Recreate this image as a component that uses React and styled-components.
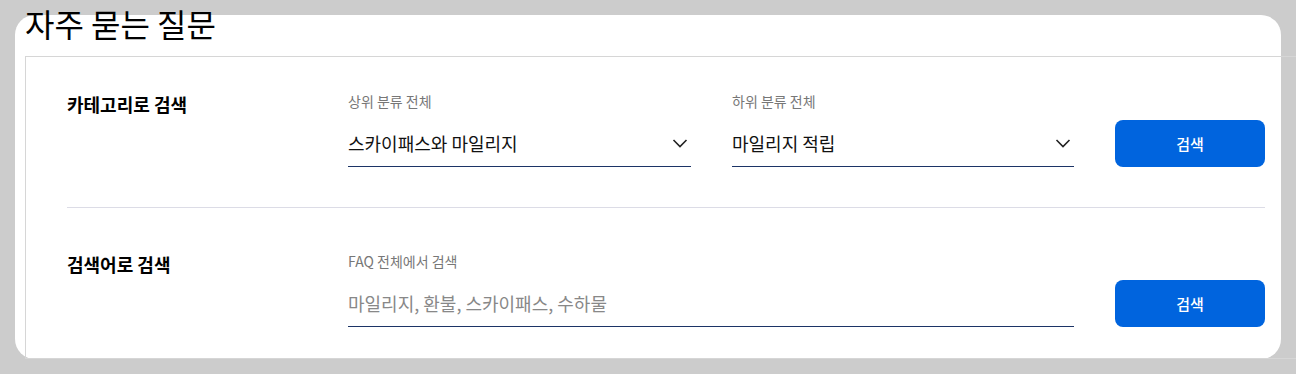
import styled, { createGlobalStyle } from "styled-components";

const GlobalStyle = createGlobalStyle`
  html, body {
    margin: 0;
    padding: 0;
    background: #cccccc;
    overflow-x: hidden;
    font-family: "Noto Sans CJK KR", "Noto Sans", sans-serif;
  }
`;

const Card = styled.section`
  display: flow-root;
  margin: 15px 0 0 15px;
  width: 1266px;
  height: 344px;
  background: #fff;
  border-radius: 20px;
  padding: 0 0 0 10px;
  box-sizing: border-box;
`;

const Title = styled.h2`
  margin: -13px 0 12px 0;
  font-size: 32px;
  line-height: 42px;
  font-weight: 400;
  color: #000;
`;

const Panel = styled.div`
  width: 1282px;
  box-sizing: border-box;
  border: 1px solid #d6d6d6;
  padding: 0 41px;
`;

const Row = styled.div`
  display: grid;
  grid-template-columns: 240px 343px 342px 150px;
  column-gap: 41px;
  align-items: end;
  padding: ${(p) => (p.$first ? "35px 0 40px" : "44px 0 31px")};
  border-bottom: ${(p) => (p.$first ? "1px solid #dcdce6" : "none")};
`;

const RowLabel = styled.h3`
  align-self: start;
  margin: 0;
  font-size: 18px;
  line-height: 24px;
  font-weight: 700;
  color: #000;
`;

const Field = styled.div`
  display: flex;
  flex-direction: column;
  grid-column: ${(p) => (p.$wide ? "2 / span 2" : "auto")};
`;

const FieldLabel = styled.label`
  font-size: 14px;
  line-height: 18px;
  color: #777;
  margin-bottom: 10px;
`;

const Select = styled.button`
  box-sizing: border-box;
  display: flex;
  align-items: center;
  justify-content: space-between;
  height: 47px;
  padding: 0 3px 0 0;
  border: none;
  border-bottom: 1px solid #1c3466;
  background: transparent;
  font-family: inherit;
  font-size: 18px;
  color: #111;
  text-align: left;
  cursor: pointer;
`;

const Input = styled.input`
  box-sizing: border-box;
  height: 47px;
  padding: 0;
  border: none;
  border-bottom: 1px solid #1c3466;
  background: transparent;
  font-family: inherit;
  font-size: 18px;
  color: #111;
  outline: none;

  &::placeholder {
    color: #888;
  }
`;

const SearchButton = styled.button`
  box-sizing: border-box;
  height: 47px;
  border: none;
  border-radius: 8px;
  background: #0064de;
  color: #fff;
  font-family: inherit;
  font-size: 15px;
  font-weight: 500;
  cursor: pointer;
`;

const Chevron = () => (
  <svg width="16" height="16" viewBox="0 0 16 16" fill="none">
    <path d="M1.5 5l6.5 6.5L14.5 5" stroke="#222" strokeWidth="1.6" />
  </svg>
);

export default function App() {
  return (
    <>
      <GlobalStyle />
      <Card>
        <Title>자주 묻는 질문</Title>
        <Panel>
          <Row $first>
            <RowLabel>카테고리로 검색</RowLabel>
            <Field>
              <FieldLabel>상위 분류 전체</FieldLabel>
              <Select>
                스카이패스와 마일리지
                <Chevron />
              </Select>
            </Field>
            <Field>
              <FieldLabel>하위 분류 전체</FieldLabel>
              <Select>
                마일리지 적립
                <Chevron />
              </Select>
            </Field>
            <SearchButton>검색</SearchButton>
          </Row>
          <Row>
            <RowLabel>검색어로 검색</RowLabel>
            <Field $wide>
              <FieldLabel>FAQ 전체에서 검색</FieldLabel>
              <Input placeholder="마일리지, 환불, 스카이패스, 수하물" />
            </Field>
            <SearchButton>검색</SearchButton>
          </Row>
        </Panel>
      </Card>
    </>
  );
}
